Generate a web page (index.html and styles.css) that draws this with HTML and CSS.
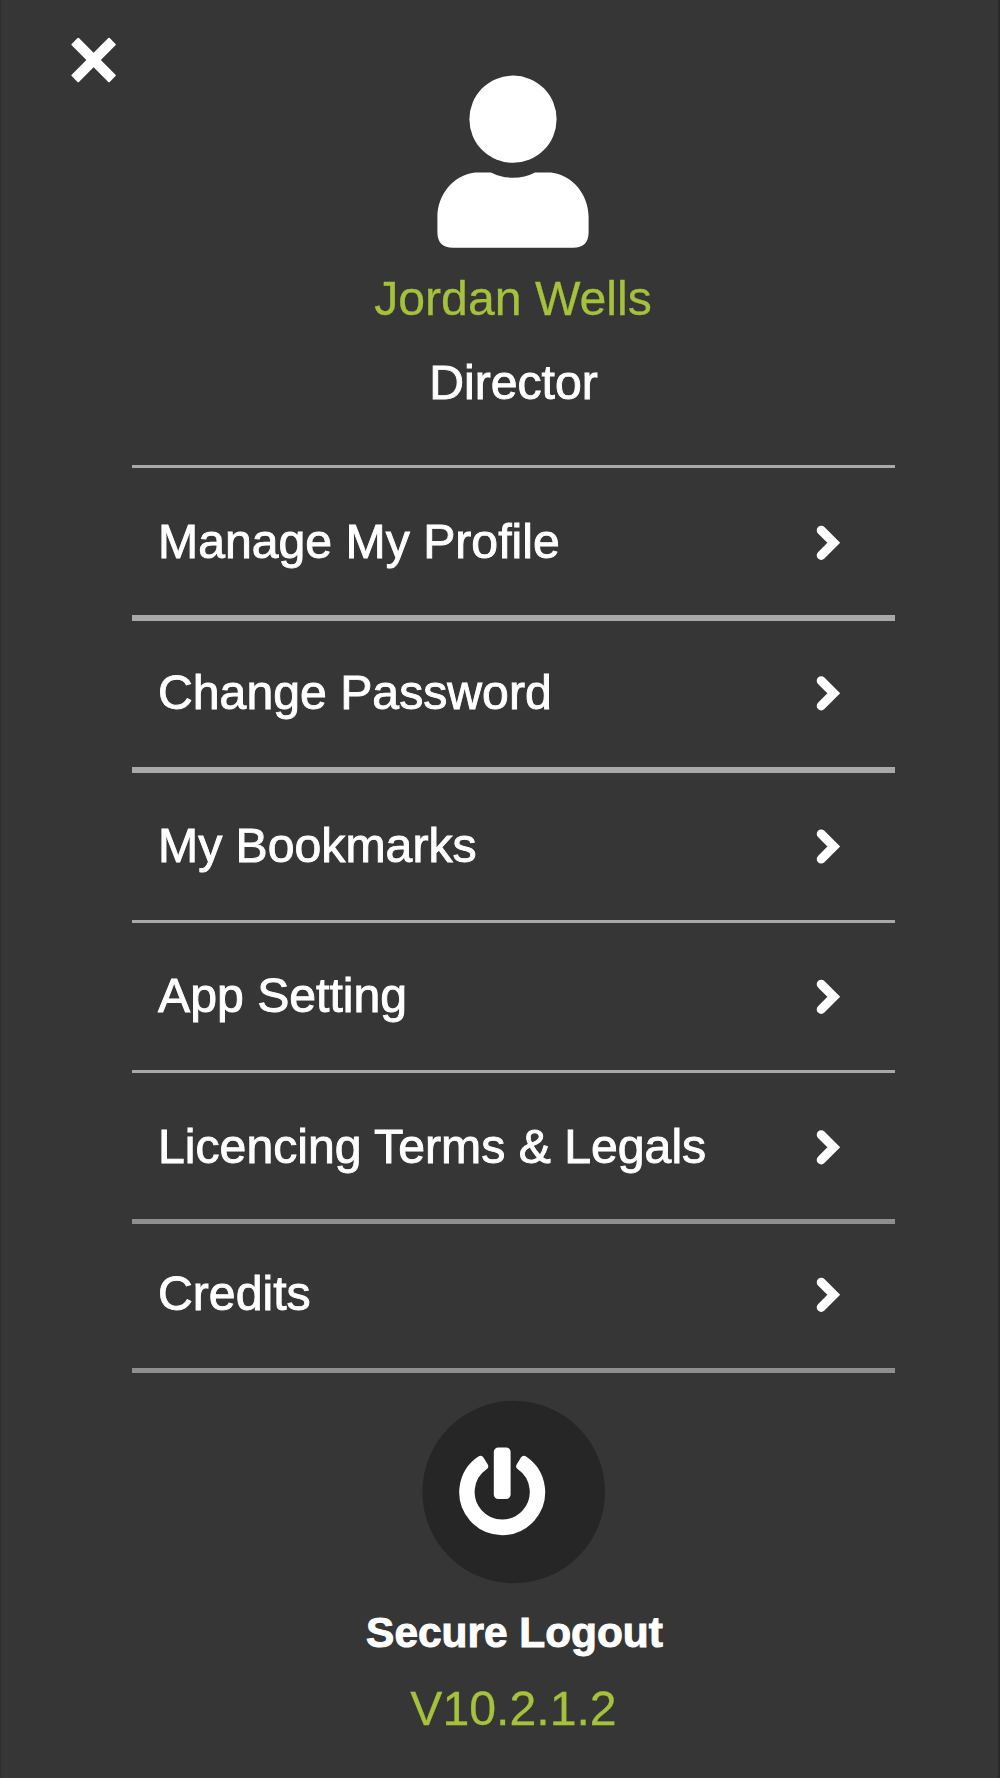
FILE: index.html
```html
<!DOCTYPE html>
<html lang="en">
<head>
<meta charset="utf-8">
<title>Profile menu</title>
<link rel="stylesheet" href="styles.css">
</head>
<body>
<main class="panel">
  <button class="close" aria-label="Close">
    <svg width="46" height="46" viewBox="0 0 46 46"><path d="M7.2 1.8 22.6 17.2 38 1.8 43.8 7.6 28.4 23 43.8 38.4 38 44.2 22.6 28.8 7.2 44.2 1.4 38.4 16.8 23 1.4 7.6Z"/></svg>
  </button>
  <header class="profile">
    <svg class="avatar" width="156" height="176" viewBox="0 0 156 176">
      <circle cx="77" cy="45.2" r="43.6"/>
      <path d="M39 98.4H55Q65 103.7 77 103.7T99 98.4H115C137 101 152.6 121 152.6 143V158Q152.6 173.8 137 173.8H17Q1.4 173.8 1.4 158V143C1.4 121 17 101 39 98.4Z"/>
    </svg>
    <h1 class="name">Jordan Wells</h1>
    <p class="role">Director</p>
  </header>
  <nav class="menu">
    <a class="item item-profile"><span>Manage My Profile</span><svg class="chevron" viewBox="0 0 26 42"><path d="M5.2 10.2 17.8 22.8 5.2 35.4"/></svg></a>
    <a class="item item-password"><span>Change Password</span><svg class="chevron" viewBox="0 0 26 42"><path d="M5.2 9.7 17.8 22.3 5.2 34.9"/></svg></a>
    <a class="item item-bookmarks"><span>My Bookmarks</span><svg class="chevron" viewBox="0 0 26 42"><path d="M5.2 9.9 17.8 22.5 5.2 35.1"/></svg></a>
    <a class="item item-setting"><span>App Setting</span><svg class="chevron" viewBox="0 0 26 42"><path d="M5.2 10.2 17.8 22.8 5.2 35.4"/></svg></a>
    <a class="item item-legal"><span>Licencing Terms &amp; Legals</span><svg class="chevron" viewBox="0 0 26 42"><path d="M5.2 9.7 17.8 22.3 5.2 34.9"/></svg></a>
    <a class="item item-credits"><span>Credits</span><svg class="chevron" viewBox="0 0 26 42"><path d="M5.2 10.2 17.8 22.8 5.2 35.4"/></svg></a>
  </nav>
  <footer class="logout">
    <svg class="power" width="184" height="184" viewBox="0 0 184 184">
      <circle class="disc" cx="91.7" cy="92" r="91.3"/>
      <path class="ring" d="M58.4 59.6A39.2 39.2 0 1 0 102 59.6L98 66.2A31.3 31.3 0 1 1 62.4 66.2Z"/>
      <rect class="stem" x="71.8" y="47.4" width="16.8" height="51.6" rx="4.5"/>
    </svg>
    <p class="logout-label">Secure Logout</p>
    <p class="version">V10.2.1.2</p>
  </footer>
</main>
</body>
</html>
```
FILE: styles.css
```css
* {
  box-sizing: border-box;
}

body {
  margin: 0;
  background: #363636;
  color: #fff;
  font-family: "Liberation Sans", Arial, sans-serif;
  font-size: 48.2px;
  line-height: 56px;
}

h1,
p {
  margin: 0;
  font-size: inherit;
  font-weight: 400;
  white-space: nowrap;
}

.panel {
  height: 1778px;
  display: flex;
  flex-direction: column;
  border-left: 1px solid #303030;
  border-right: 2px solid #292929;
  overflow: hidden;
}

.close {
  width: 46px;
  height: 46px;
  margin: 37px 0 0 70px;
  padding: 0;
  border: 0;
  background: none;
}

.close svg {
  display: block;
  fill: #fff;
  stroke: #fff;
  stroke-width: 2;
  stroke-linejoin: round;
}

.profile {
  width: 763px;
  height: 391px;
  margin: -9px 0 0 131px;
  display: flex;
  flex-direction: column;
  align-items: center;
}

.avatar {
  flex: none;
  fill: #fff;
}

.name,
.version {
  color: #a6c13c;
  -webkit-text-stroke: 0.3px #a6c13c;
}

.name {
  margin-top: 20px;
  padding-right: 1px;
}

.role {
  margin-top: 28px;
}

.role,
.item span {
  -webkit-text-stroke: 0.9px #fff;
}

.menu {
  width: 763px;
  margin-left: 131px;
  border-top: 3px solid #a9a9a9;
}

.item {
  display: flex;
  align-items: center;
  justify-content: space-between;
  padding: 0 53px 3px 26px;
  border-bottom: 3px solid #a9a9a9;
  height: 150px;
  white-space: nowrap;
}

.item-profile {
  height: 153px;
  padding-bottom: 2px;
  border-bottom-width: 6px;
}

.item-password {
  height: 152px;
  padding-bottom: 5px;
  border-bottom-width: 6px;
}

.item-bookmarks {
  padding-bottom: 4px;
}

.item-legal {
  height: 151px;
  padding-bottom: 1px;
  border-bottom: 5px solid #8f8f8f;
}

.item-credits {
  height: 149px;
  padding-bottom: 6px;
  border-bottom: 5px solid #8f8f8f;
}

.chevron {
  width: 26px;
  height: 42px;
  fill: none;
  stroke: #fff;
  stroke-width: 9;
  stroke-linecap: round;
  stroke-linejoin: miter;
}

.logout {
  width: 763px;
  margin: 27px 0 0 131px;
  display: flex;
  flex-direction: column;
  align-items: center;
}

.power {
  display: block;
}

.disc {
  fill: #262626;
}

.ring {
  fill: #fff;
  stroke: #fff;
  stroke-width: 7.5;
  stroke-linejoin: round;
}

.stem {
  fill: #fff;
}

.logout-label {
  margin-top: 21px;
  padding-left: 2px;
  font-size: 42.4px;
  font-weight: 700;
  -webkit-text-stroke: 1px #fff;
}

.version {
  margin-top: 19px;
}
```
